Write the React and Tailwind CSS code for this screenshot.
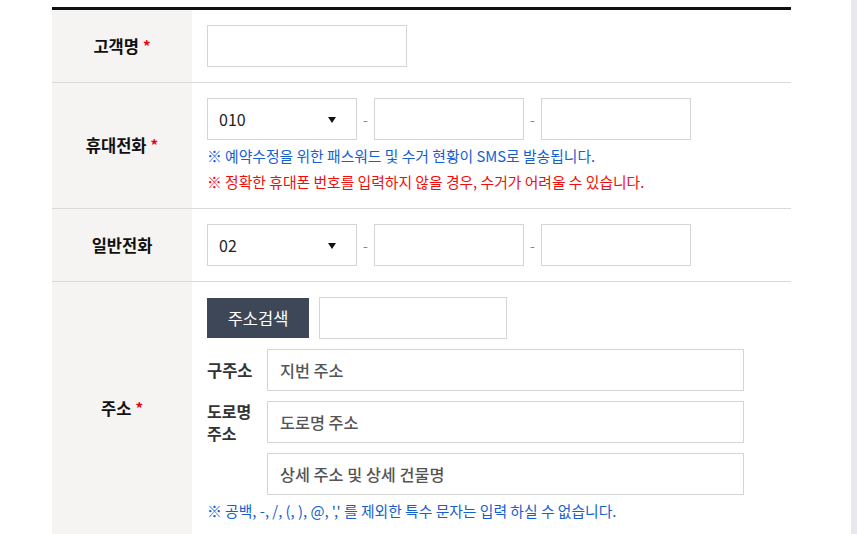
export default function App() {
  const font = { fontFamily: '"Noto Sans CJK KR", "Liberation Sans", sans-serif' };
  const Arrow = () => (
    <svg width="8" height="6" viewBox="0 0 8 6" className="absolute right-[20px] top-[18px]">
      <path d="M0 0 H8 L4 6 Z" fill="#111" />
    </svg>
  );
  const Select = ({ value }) => (
    <div className="relative w-[150px] h-[42px] border border-[#d5d5d5] bg-white flex items-center pl-[11px] text-[16px] text-[#222]">
      {value}
      <Arrow />
    </div>
  );
  const Input = ({ w = "w-[150px]", children }) => (
    <div className={`${w} h-[42px] border border-[#d5d5d5] bg-white flex items-center pl-[12px] text-[16.3px] font-medium text-[#555]`}>
      {children}
    </div>
  );
  const Dash = () => <span className="w-[17px] text-center text-[#888] text-[14px]">-</span>;
  const Phone = ({ first }) => (
    <div className="flex items-center">
      <Select value={first} />
      <Dash />
      <Input />
      <Dash />
      <Input />
    </div>
  );
  const Label = ({ children, req }) => (
    <div className="w-[140px] shrink-0 bg-[#f6f4f3] flex items-center justify-center text-[16.5px] font-bold text-[#111]">
      {children}
      {req && <span className="text-[#e60012] ml-[4px] text-[15px]">*</span>}
    </div>
  );
  return (
    <div className="w-[857px] h-[534px] overflow-hidden flex bg-white" style={font}>
      <div className="flex-1 pl-[52px] pt-[7px]">
        <div className="w-[739px] border-t-[3px] border-[#111]">
          <div className="flex border-b border-[#d9d9d9]">
            <Label req>고객명</Label>
            <div className="py-[15px] pl-[15px]">
              <Input w="w-[200px]" />
            </div>
          </div>
          <div className="flex border-b border-[#d9d9d9]">
            <Label req>휴대전화</Label>
            <div className="pt-[15px] pb-[13px] pl-[15px]">
              <Phone first="010" />
              <div className="mt-[3px] text-[14.8px] leading-[26px]">
                <p className="text-[#1560cf]">※ 예약수정을 위한 패스워드 및 수거 현황이 SMS로 발송됩니다.</p>
                <p className="text-[#f20d0d]">※ 정확한 휴대폰 번호를 입력하지 않을 경우, 수거가 어려울 수 있습니다.</p>
              </div>
            </div>
          </div>
          <div className="flex border-b border-[#d9d9d9]">
            <Label>일반전화</Label>
            <div className="py-[15px] pl-[15px]">
              <Phone first="02" />
            </div>
          </div>
          <div className="flex">
            <Label req>주소</Label>
            <div className="pt-[15px] pb-[12px] pl-[15px]">
              <div className="flex items-center">
                <button className="w-[102px] h-[40px] bg-[#3d4757] text-white text-[16.5px] font-normal">주소검색</button>
                <div className="ml-[10px]">
                  <Input w="w-[188px]" />
                </div>
              </div>
              <div className="mt-[10px] flex flex-col gap-[10px]">
                <div className="flex items-center">
                  <div className="w-[60px] text-[16.5px] font-bold text-[#333] leading-[21px]">구주소</div>
                  <Input w="w-[477px]">지번 주소</Input>
                </div>
                <div className="flex items-center h-[42px]">
                  <div className="w-[60px] text-[16px] font-bold text-[#333] leading-[22px]">도로명<br />주소</div>
                  <Input w="w-[477px]">도로명 주소</Input>
                </div>
                <div className="flex items-center">
                  <div className="w-[60px]" />
                  <Input w="w-[477px]">상세 주소 및 상세 건물명</Input>
                </div>
              </div>
              <p className="mt-[4px] text-[14.8px] leading-[24px] text-[#1560cf]">※ 공백, -, /, (, ), @, ',' 를 제외한 특수 문자는 입력 하실 수 없습니다.</p>
            </div>
          </div>
        </div>
      </div>
      <div className="w-[6px] bg-[#e8e7ed]" />
    </div>
  );
}
